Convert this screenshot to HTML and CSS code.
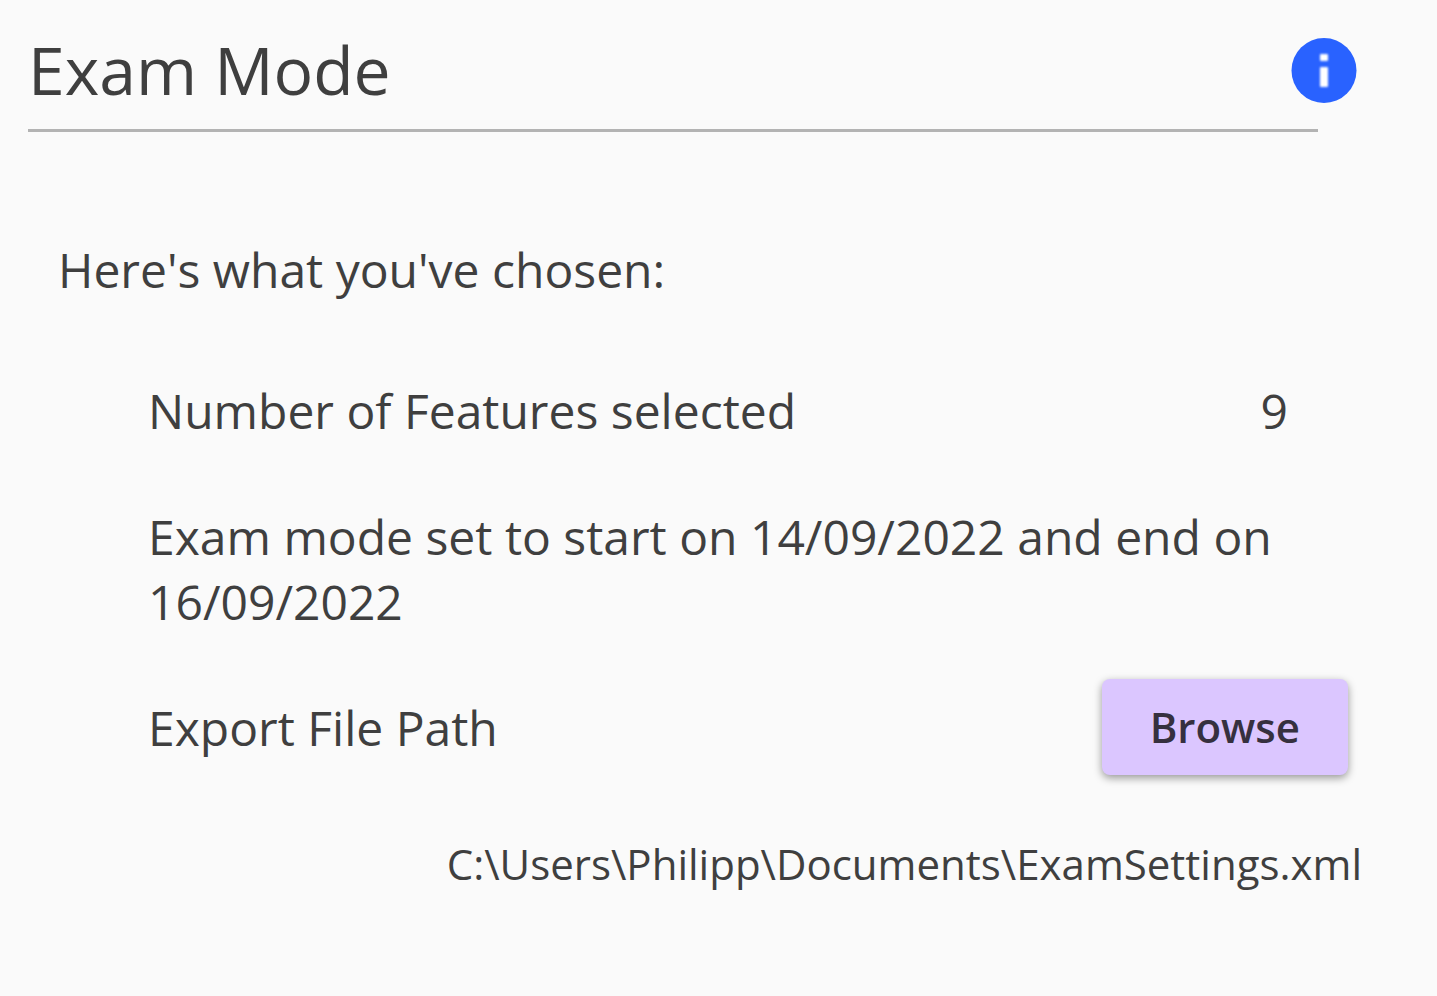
FILE: index.html
```html
<!DOCTYPE html>
<html lang="en">
<head>
    <meta charset="UTF-8">
    <meta name="viewport" content="width=device-width, initial-scale=1.0">
    <title>Exam Mode</title>
    <link rel="stylesheet" href="styles.css">
</head>
<body>
    <main class="exam-panel">
        <header class="panel-header">
            <h1>Exam Mode</h1>
            <button class="info-button" type="button" aria-label="Info">
                <svg viewBox="0 0 66 66" aria-hidden="true">
                    <circle cx="33" cy="33.5" r="32.5" fill="#2962ff"/>
                    <g class="info-mark">
                        <rect x="29" y="17" width="8" height="7" rx="1"/>
                        <rect x="29" y="30" width="8" height="20" rx="1"/>
                    </g>
                </svg>
            </button>
        </header>

        <p class="intro">Here's what you've chosen:</p>

        <div class="summary">
            <div class="summary-row">
                <span>Number of Features selected</span>
                <span class="count">9</span>
            </div>
            <p class="summary-row">Exam mode set to start on 14/09/2022 and end on 16/09/2022</p>
            <div class="summary-row export-row">
                <span>Export File Path</span>
                <button class="browse-button" type="button">Browse</button>
            </div>
        </div>

        <p class="file-path">C:\Users\Philipp\Documents\ExamSettings.xml</p>
    </main>
</body>
</html>
```
FILE: styles.css
```css
* {
    margin: 0;
    padding: 0;
    box-sizing: border-box;
}

body {
    background: #fafafa;
    color: #3f3f3f;
    font-family: "Open Sans", "Noto Sans", sans-serif;
    font-size: 48px;
    line-height: 65px;
}

.exam-panel {
    padding: 10px 75px 0 28px;
}

.panel-header {
    display: flex;
    justify-content: space-between;
    align-items: center;
    height: 122px;
    margin-right: 44px;
    border-bottom: 3px solid #b3b3b3;
}

h1 {
    font-size: 66px;
    font-weight: 400;
    line-height: 89px;
}

/* the icon hangs past the end of the rule */
.info-button {
    width: 66px;
    height: 66px;
    margin-right: -39px;
    border: none;
    background: none;
    cursor: pointer;
}

.info-button svg {
    display: block;
}

.info-mark {
    fill: #fff;
    filter: blur(1px);
}

.intro {
    margin-top: 105px;
    padding-left: 30px;
}

.summary {
    margin-top: 76px;
    padding: 0 14px 0 120px;
}

.summary-row {
    display: flex;
    justify-content: space-between;
    align-items: center;
}

.summary-row + .summary-row {
    margin-top: 61px;
}

.count {
    margin-right: 60px;
}

.summary-row + .export-row {
    margin-top: 45px;
}

.browse-button {
    padding: 0 48px;
    border: none;
    border-radius: 8px;
    background: #dbc6ff;
    box-shadow: 0 3px 8px rgba(0, 0, 0, 0.4);
    color: #36303f;
    font-family: inherit;
    font-size: 42px;
    font-weight: 600;
    line-height: 96px;
    cursor: pointer;
}

.file-path {
    margin-top: 60px;
    font-size: 42px;
    line-height: 58px;
    text-align: right;
}
```
